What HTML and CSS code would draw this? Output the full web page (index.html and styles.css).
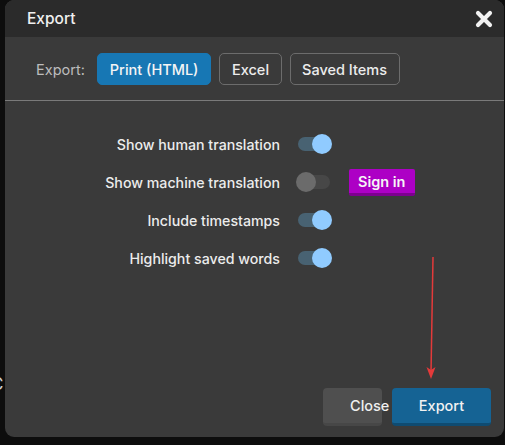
FILE: index.html
```html
<!DOCTYPE html>
<html>
<head>
<meta charset="utf-8">
<link rel="stylesheet" href="styles.css">
</head>
<body>
<span class="behind">C</span>
<div class="dialog">
  <div class="header">
    <span class="title">Export</span>
    <svg class="close-x" width="18" height="18" viewBox="0 0 18 18"><path d="M3 3 L15 15 M15 3 L3 15" stroke="#f2f2f2" stroke-width="4.2" stroke-linecap="round"/></svg>
  </div>
  <div class="body">
    <div class="tabs">
      <span class="tabs-label">Export:</span>
      <button class="tab active">Print (HTML)</button>
      <button class="tab">Excel</button>
      <button class="tab">Saved Items</button>
    </div>
    <div class="sep"></div>
    <div class="options">
      <div class="opt-label">Show human translation</div>
      <div class="toggle on"><span class="track"></span><span class="knob"></span></div>
      <div></div>
      <div class="opt-label">Show machine translation</div>
      <div class="toggle"><span class="track"></span><span class="knob"></span></div>
      <div><button class="signin">Sign in</button></div>
      <div class="opt-label">Include timestamps</div>
      <div class="toggle on"><span class="track"></span><span class="knob"></span></div>
      <div></div>
      <div class="opt-label">Highlight saved words</div>
      <div class="toggle on"><span class="track"></span><span class="knob"></span></div>
      <div></div>
    </div>
  </div>
  <div class="footer">
    <button class="btn-close">Close</button>
    <button class="btn-export">Export</button>
  </div>
</div>
<svg class="arrow" width="20" height="130" viewBox="0 0 20 130"><path d="M10 2 L8 118" stroke="#e33a3a" stroke-width="1.5" fill="none"/><path d="M3.5 112 L8 124 L12.5 112 L8 115 Z" fill="#e33a3a"/></svg>
</body>
</html>
```
FILE: styles.css
```css
html, body {
  margin: 0;
  padding: 0;
  background: #0d0d0d;
  font-family: Inter, "Noto Sans", "Liberation Sans", sans-serif;
}
body {
  position: relative;
  width: 505px;
  height: 445px;
  overflow: hidden;
}
.behind {
  position: absolute;
  left: -9px;
  top: 374px;
  color: #cfcfcf;
  font-size: 17px;
}
.dialog {
  position: relative;
  margin-left: 5px;
  width: 499px;
  height: 437px;
  background: #3a3a3a;
  border-radius: 9px;
  overflow: hidden;
  display: flex;
  flex-direction: column;
}
.header {
  height: 37px;
  flex: none;
  background: #2b2b2b;
  display: flex;
  align-items: center;
  justify-content: space-between;
  padding: 0 11px 0 22px;
}
.title {
  color: #f0f0f0;
  font-size: 15.5px;
  font-weight: 500;
}
.close-x {
  display: block;
}
.body {
  flex: 1;
}
.tabs {
  display: flex;
  align-items: center;
  padding: 16px 0 0 31px;
  height: 32px;
}
.tabs-label {
  color: #bdbdbd;
  font-size: 14.5px;
  margin-right: 12px;
}
.tab {
  height: 32px;
  box-sizing: border-box;
  border: 1px solid #6c6c6c;
  background: transparent;
  color: #ececec;
  font-family: inherit;
  font-size: 14.5px;
  font-weight: 500;
  padding: 0 11.5px;
  border-radius: 5px;
  margin-right: 8px;
}
.tab.active {
  background: #1777b4;
  border-color: #1777b4;
  color: #f4f4f4;
  padding: 0 12px;
}
.sep {
  margin-top: 15px;
  height: 1px;
  background: #7a7a7a;
}
.options {
  display: grid;
  grid-template-columns: 275px 35px auto;
  grid-auto-rows: 38px;
  column-gap: 17px;
  align-items: center;
  padding-top: 24px;
}
.opt-label {
  text-align: right;
  color: #ececec;
  font-size: 14.2px;
  font-weight: 500;
}
.toggle {
  position: relative;
  width: 35px;
  height: 20px;
}
.track {
  position: absolute;
  left: 1px;
  top: 3px;
  width: 32px;
  height: 14px;
  border-radius: 7px;
  background: #486272;
}
.toggle:not(.on) .track {
  background: #474747;
}
.knob {
  position: absolute;
  top: 0;
  left: -1px;
  width: 20px;
  height: 20px;
  border-radius: 50%;
  background: #6b6b6b;
}
.toggle.on .knob {
  left: 15px;
  background: #90cbff;
}
.signin {
  display: block;
  background: #ad00c5;
  border: none;
  border-bottom: 3px solid #7d008f;
  color: #f6f6f6;
  font-family: inherit;
  font-size: 14.5px;
  font-weight: 600;
  height: 27px;
  padding: 0 9px;
  border-radius: 2px;
  margin-top: 1px;
}
.footer {
  display: flex;
  justify-content: flex-end;
  align-items: flex-end;
  padding: 0 13px 11px 0;
  gap: 10px;
}
.btn-close {
  width: 59px;
  height: 38px;
  background: #4f4f4f;
  border: none;
  border-bottom: 3px solid #474747;
  border-radius: 4px;
  color: #f0f0f0;
  font-family: inherit;
  font-size: 14.5px;
  font-weight: 500;
  padding: 0 0 0 27px;
  text-align: left;
  white-space: nowrap;
  overflow: visible;
}
.btn-export {
  width: 99px;
  height: 38px;
  background: #156394;
  border: none;
  border-bottom: 3px solid #0f4b71;
  border-radius: 4px;
  color: #f2f2f2;
  font-family: inherit;
  font-size: 14.5px;
  font-weight: 500;
  padding: 0;
}
.arrow {
  position: absolute;
  left: 423px;
  top: 255px;
}
```
